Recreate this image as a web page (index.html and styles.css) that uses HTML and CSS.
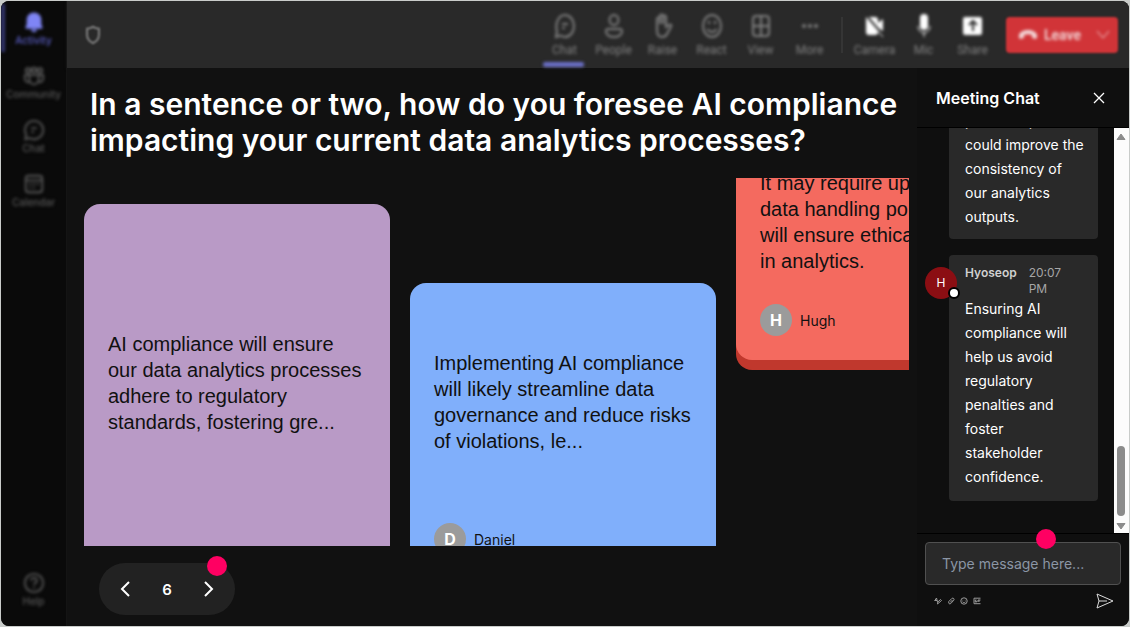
FILE: index.html
```html
<!DOCTYPE html>
<html lang="en">
<head>
<meta charset="utf-8">
<title>Meeting</title>
<link rel="stylesheet" href="styles.css">
</head>
<body>
<div class="app">
  <nav class="rail" aria-label="Apps">
    <button class="rail-item active">
      <svg width="22" height="22" viewBox="0 0 24 24" fill="currentColor"><path d="M12 1.500a8 8 0 0 0-8 8v5l-1.300 3.200c-.3.800.2 1.600 1 1.600h16.600c.8 0 1.300-.8 1-1.600L20 14.500v-5a8 8 0 0 0-8-8zM8.500 20.300a3.600 3.600 0 0 0 7 0z"/></svg>
      <span>Activity</span>
    </button>
    <button class="rail-item">
      <svg width="22" height="22" viewBox="0 0 24 24" fill="none" stroke="currentColor" stroke-width="2"><circle cx="5.500" cy="6" r="2.500"/><circle cx="12" cy="5.500" r="2.500"/><circle cx="18.500" cy="6" r="2.500"/><path d="M7 11h10v5a5 5 0 0 1-10 0zM7 11H2v4a4 4 0 0 0 5 3.500M17 11h5v4a4 4 0 0 1-5 3.500"/></svg>
      <span>Community</span>
    </button>
    <button class="rail-item">
      <svg width="22" height="22" viewBox="0 0 24 24" fill="none" stroke="currentColor" stroke-width="2"><path d="M12 2a10 10 0 1 1-4.700 18.800L2.500 22l1-5A10 10 0 0 1 12 2zM9 10h6M9 14h3"/></svg>
      <span>Chat</span>
    </button>
    <button class="rail-item">
      <svg width="22" height="22" viewBox="0 0 24 24" fill="none" stroke="currentColor" stroke-width="2"><rect x="3" y="3" width="18" height="18" rx="3"/><path d="M3 8h18M7 12h2M11 12h2M15 12h2M7 16h2M11 16h2"/></svg>
      <span>Calendar</span>
    </button>
    <button class="rail-item help">
      <svg width="22" height="22" viewBox="0 0 24 24" fill="none" stroke="currentColor" stroke-width="2"><circle cx="12" cy="12" r="10"/><path d="M9 9.500a3 3 0 1 1 4 2.800c-.8.400-1 .9-1 2M12 16v2"/></svg>
      <span>Help</span>
    </button>
  </nav>

  <div class="workspace">
    <header class="topbar">
      <svg class="shield" width="18" height="20" viewBox="0 0 18 22" fill="none" stroke="currentColor" stroke-width="2"><path d="M9 2c2 1.500 4 2 6.500 2v7c0 4-2.500 7-6.500 9-4-2-6.500-5-6.500-9V4C5 4 7 3.500 9 2z"/></svg>
      <div class="tools">
        <button class="tool selected">
          <svg width="24" height="28" viewBox="0 0 24 28" fill="none" stroke="currentColor" stroke-width="2"><path d="M12 3c5 0 9 5 9 11s-4 11-9 11c-2 0-3-.5-4.500-1.500L3 25l1-5.500C2 12 5 3 12 3zM9 12h6M9 16h3"/></svg>
          <span>Chat</span>
        </button>
        <button class="tool">
          <svg width="24" height="28" viewBox="0 0 24 28" fill="none" stroke="currentColor" stroke-width="2"><ellipse cx="12" cy="8" rx="4.500" ry="5"/><path d="M6 17h12c1.500 0 2 1 2 2.500 0 3.500-4 5.500-8 5.500s-8-2-8-5.500C4 18 4.500 17 6 17z"/></svg>
          <span>People</span>
        </button>
        <button class="tool">
          <svg width="24" height="28" viewBox="0 0 24 28" fill="none" stroke="currentColor" stroke-width="2"><path d="M6 14V7c0-2 3-2 3 0v5V4c0-2 3-2 3 0v8V5c0-2 3-2 3 0v10l3-2c1.500-1 3 0 2 1.500L16 22c-1 2-2.500 3-5 3-4 0-5-4-5-7z"/></svg>
          <span>Raise</span>
        </button>
        <button class="tool">
          <svg width="24" height="28" viewBox="0 0 24 28" fill="none" stroke="currentColor" stroke-width="2"><ellipse cx="12" cy="14" rx="9" ry="11"/><path d="M7.500 17c2.500 4 6.500 4 9 0M9 9v3M15 9v3"/></svg>
          <span>React</span>
        </button>
        <button class="tool">
          <svg width="24" height="28" viewBox="0 0 24 28" fill="none" stroke="currentColor" stroke-width="2"><rect x="4" y="4" width="16" height="20" rx="3"/><path d="M12 4v20M4 14h16"/></svg>
          <span>View</span>
        </button>
        <button class="tool">
          <svg width="24" height="28" viewBox="0 0 24 28" fill="currentColor"><circle cx="6" cy="14" r="2"/><circle cx="12" cy="14" r="2"/><circle cx="18" cy="14" r="2"/></svg>
          <span>More</span>
        </button>
        <i class="divider"></i>
        <button class="tool bright">
          <svg width="24" height="28" viewBox="0 0 24 28" fill="currentColor"><path d="M3 5h9c2 0 3 1 3 3v3l5-4v12l-5-3v4c0 2-1 3-3 3H6c-2 0-3-1-3-3z"/><path d="M2 2l19 22" stroke="#292929" stroke-width="2"/><path d="M15 19l5 6" stroke="currentColor" stroke-width="1"/></svg>
          <span>Camera</span>
        </button>
        <button class="tool bright">
          <svg width="24" height="28" viewBox="0 0 24 28" fill="currentColor"><rect x="8" y="2" width="8" height="16" rx="4"/><path d="M6 14c0 9 12 9 12 0M12 20v5" fill="none" stroke="currentColor" stroke-width="1"/></svg>
          <span>Mic</span>
        </button>
        <button class="tool bright">
          <svg width="24" height="28" viewBox="0 0 24 28" fill="currentColor"><rect x="2" y="5" width="19" height="18" rx="2"/><path d="M12 19V9M8 13l4-4 4 4" fill="none" stroke="#292929" stroke-width="2"/></svg>
          <span>Share</span>
        </button>
        <button class="leave">
          <svg width="20" height="12" viewBox="0 0 20 12" fill="currentColor"><path d="M10 1c4 0 8 1.500 9 5 .3 1.500 0 3-1 4l-4-1V6c-2.500-1-5.500-1-8 0v3l-4 1C1 9 .7 7.500 1 6c1-3.500 5-5 9-5z"/></svg>
          <span>Leave</span>
          <svg class="caret" width="14" height="10" viewBox="0 0 14 10" fill="none" stroke="currentColor"><path d="M1 1l6 7 6-7"/></svg>
        </button>
      </div>
    </header>

    <div class="content">
      <main class="stage">
        <h1>In a sentence or two, how do you foresee AI compliance impacting your current data analytics processes?</h1>
        <div class="board">
          <article class="card purple">
            <p>AI compliance will ensure our data analytics processes adhere to regulatory standards, fostering gre...</p>
          </article>
          <article class="card blue">
            <p>Implementing AI compliance will likely streamline data governance and reduce risks of violations, le...</p>
            <footer class="author"><b>D</b><span>Daniel</span></footer>
          </article>
          <article class="card red">
            <p>It may require updates to<br>data handling policies but<br>will ensure ethical rigor<br>in analytics.</p>
            <footer class="author"><b>H</b><span>Hugh</span></footer>
          </article>
        </div>
        <div class="pager">
          <button aria-label="Previous"><svg width="12" height="18" viewBox="0 0 12 18" fill="none" stroke="currentColor" stroke-width="2"><path d="M10 2L3 9l7 7"/></svg></button>
          <span>6</span>
          <button aria-label="Next"><svg width="12" height="18" viewBox="0 0 12 18" fill="none" stroke="currentColor" stroke-width="2"><path d="M2 2l7 7-7 7"/></svg></button>
          <i class="hotspot"></i>
        </div>
      </main>

      <aside class="chat">
        <header class="chat-head">
          <h2>Meeting Chat</h2>
          <button aria-label="Close"><svg width="12" height="12" viewBox="0 0 12 12" fill="none" stroke="currentColor" stroke-width="1.300"><path d="M1 1l10 10M11 1L1 11"/></svg></button>
        </header>
        <div class="chat-body">
          <div class="messages">
            <div class="message"><p>positive updates could improve the consistency of our analytics outputs.</p></div>
            <div class="message">
              <div class="avatar">H<i></i></div>
              <div class="meta"><strong>Hyoseop</strong><time>20:07 PM</time></div>
              <p>Ensuring AI compliance will help us avoid regulatory penalties and foster stakeholder confidence.</p>
            </div>
          </div>
          <div class="scrollbar">
            <svg width="10" height="8" viewBox="0 0 10 8"><path d="M5 1l4 5.500H1z" fill="#8b8b8b" stroke="#8b8b8b" stroke-linejoin="round"/></svg>
            <i class="thumb"></i>
            <svg width="10" height="8" viewBox="0 0 10 8"><path d="M5 7L1 1.500h8z" fill="#8b8b8b" stroke="#8b8b8b" stroke-linejoin="round"/></svg>
          </div>
        </div>
        <form class="composer">
          <div class="field">
            <input type="text" placeholder="Type message here..." aria-label="Message">
            <i class="hotspot"></i>
          </div>
          <div class="actions">
            <button type="button" aria-label="Format"><svg width="8" height="8" viewBox="0 0 8 8"><path d="M.5 4L2.500 1l1 4M1 3.500h2M3.500 7L7.500 3.500 6.500 2.500 3.800 5z"/></svg></button>
            <button type="button" aria-label="Attach"><svg width="8" height="8" viewBox="0 0 8 8"><path d="M1.800 4.500l3-3c1.200-1 3 .3 2 1.700L3.800 6.500c-1.200 1.200-3-.5-2-2zM3 5.500L5.500 3"/></svg></button>
            <button type="button" aria-label="Emoji"><svg width="8" height="8" viewBox="0 0 8 8"><circle cx="4" cy="4" r="3.200"/><path d="M2.500 4.800c1 1 2 1 3 0M2.800 2.800v.6M5.200 2.800v.6"/></svg></button>
            <button type="button" aria-label="GIF"><svg width="8" height="8" viewBox="0 0 8 8"><path d="M7.500 1.200H1v5.500h6.500M3.500 3H2.300v2h1.400V4M5 5V3h2.500M5 4h2"/></svg></button>
            <button type="submit" class="send" aria-label="Send"><svg width="18" height="16" viewBox="0 0 18 16"><path d="M1 1l16 7L1 15l2-7zM3 8h8"/></svg></button>
          </div>
        </form>
      </aside>
    </div>
  </div>
</div>
</body>
</html>
```
FILE: styles.css
```css
* { box-sizing: border-box; }

body {
  margin: 0;
  height: 100vh;
  padding: 1px;
  background: #c9ccca;
  color: #fff;
  font-family: Inter, "Liberation Sans", sans-serif;
}

h1, h2, p { margin: 0; }

button {
  border: 0;
  padding: 0;
  background: none;
  color: inherit;
  font: inherit;
}

svg { display: block; }

.app {
  display: flex;
  height: 100%;
  border-radius: 8px;
  overflow: hidden;
  background: #111;
}

/* Left rail */
.rail {
  flex: none;
  display: flex;
  flex-direction: column;
  width: 66px;
  padding: 0 0 10px;
  background: #0a0a0a;
  border-right: 1px solid #141414;
}

.rail-item {
  position: relative;
  display: flex;
  flex-direction: column;
  align-items: center;
  justify-content: center;
  gap: 1px;
  height: 54px;
  color: #585858;
  font-size: 10px;
  font-weight: 500;
  line-height: 12px;
  filter: blur(1px) blur(1px);
}

.rail-item.active { color: #5b5fc7; }
.rail-item.active svg { color: #7f85f5; }

.rail-item.active::before {
  content: "";
  position: absolute;
  left: 0;
  top: 3px;
  width: 4px;
  height: 48px;
  background: #33366f;
}

.rail-item.help { margin-top: auto; }

/* Top bar */
.workspace {
  flex: 1;
  min-width: 0;
  display: flex;
  flex-direction: column;
}

.topbar {
  flex: none;
  display: flex;
  align-items: center;
  justify-content: space-between;
  height: 67px;
  padding: 0 11px 0 17px;
  background: #292929;
  box-shadow: 0 1px 3px #1a1a1a;
}

.shield { color: #888; filter: blur(1px); }

.tools { display: flex; align-items: center; }

.tool {
  position: relative;
  display: flex;
  flex-direction: column;
  align-items: center;
  gap: 1px;
  width: 49px;
  height: 67px;
  padding-top: 11px;
  color: #808080;
  font-family: Roboto, sans-serif;
  font-size: 12px;
  line-height: 18px;
  filter: blur(1px) blur(1px);
}

.tool.bright svg { color: #fff; }

.tool.selected::after {
  content: "";
  position: absolute;
  left: 3px;
  bottom: 1px;
  width: 41px;
  height: 5px;
  border-radius: 2px;
  background: #6b6fc8;
}

.divider {
  width: 2px;
  height: 36px;
  margin: 0 7px;
  background: #353535;
}

.leave {
  display: flex;
  align-items: center;
  gap: 6px;
  width: 112px;
  height: 36px;
  margin-left: 9px;
  padding: 0 8px 0 12px;
  border-radius: 4px;
  background: #d13438;
  color: #f3d9da;
  font-family: Roboto, sans-serif;
  font-size: 14px;
  font-weight: 600;
  filter: blur(1px);
}

.leave svg, .leave span { filter: blur(1px); }

.caret { margin-left: auto; }

/* Stage */
.content { flex: 1; min-height: 0; display: flex; }

.stage {
  flex: 1;
  min-width: 0;
  display: flex;
  flex-direction: column;
  align-items: flex-start;
  padding: 18px 8px 11px 17px;
  background: #111;
}

h1 {
  padding-left: 6px;
  font-size: 30px;
  font-weight: 600;
  line-height: 36px;
}

.board {
  flex: 1;
  min-height: 0;
  align-self: stretch;
  display: flex;
  align-items: flex-start;
  gap: 20px;
  margin: 20px 0 17px;
  overflow: hidden;
}

.card {
  flex: none;
  display: flex;
  flex-direction: column;
  justify-content: center;
  width: 306px;
  padding: 24px;
  border-radius: 16px;
  color: #111;
}

.card p {
  margin: auto 0;
  font-family: "Liberation Sans", Arial, sans-serif;
  font-size: 20px;
  line-height: 26px;
}

.purple { min-height: 358px; margin-top: 26px; background: #b99ac6; }
.blue { min-height: 296px; margin-top: 105px; background: #80affb; }
.red { margin-top: -32px; background: #f46a5f; box-shadow: 0 10px #c0382d; }

.author {
  display: flex;
  align-items: center;
  gap: 8px;
  padding-top: 30px;
  font-size: 14px;
}

.blue .author { padding-top: 26px; }

.author b {
  width: 32px;
  border-radius: 50%;
  background: #9b9b9b;
  color: #fff;
  font-size: 16px;
  line-height: 32px;
  text-align: center;
}

.pager {
  position: relative;
  display: flex;
  align-items: center;
  justify-content: space-between;
  width: 136px;
  height: 52px;
  margin-left: 15px;
  padding: 0 20px;
  border-radius: 26px;
  background: #222;
  font-size: 15px;
  font-weight: 600;
}

.hotspot {
  position: absolute;
  width: 20px;
  height: 20px;
  border-radius: 50%;
  background: #ff0062;
}

.pager .hotspot { right: 8px; top: -7px; }

/* Chat */
.chat {
  flex: none;
  display: flex;
  flex-direction: column;
  width: 212px;
  background: #0f0f0f;
}

.chat-head {
  display: flex;
  align-items: center;
  justify-content: space-between;
  height: 60px;
  padding: 0 24px 0 19px;
  border-bottom: 1px solid #000;
}

h2 { font-size: 16px; font-weight: 600; line-height: 24px; }

.chat-body { flex: 1; min-height: 0; display: flex; }

.messages {
  flex: 1;
  min-width: 0;
  display: flex;
  flex-direction: column;
  justify-content: flex-end;
  gap: 16px;
  padding: 0 16px 32px 32px;
  overflow: hidden;
}

.message {
  position: relative;
  padding: 10px 14px 10px 16px;
  border-radius: 4px;
  background: #292929;
  font-size: 14px;
  line-height: 24px;
}

.meta {
  display: flex;
  gap: 12px;
  padding-right: 4px;
  color: #a6a6a6;
  font-size: 12px;
  line-height: 16px;
}

.meta strong { color: #d0d0d0; font-weight: 600; }

.message:last-child { padding-bottom: 12px; }

.avatar {
  position: absolute;
  left: -24px;
  top: 12px;
  width: 32px;
  border-radius: 50%;
  background: #8b0e13;
  font-size: 12px;
  line-height: 32px;
  text-align: center;
}

.avatar i {
  position: absolute;
  right: -3px;
  bottom: 0;
  width: 12px;
  height: 12px;
  border: 2px solid #000;
  border-radius: 50%;
  background: #fff;
}

.scrollbar {
  display: flex;
  flex-direction: column;
  align-items: center;
  width: 15px;
  padding: 5px 1px 3px 0;
  background: #fcfcfc;
}

.thumb {
  width: 8px;
  height: 70px;
  margin: auto 0 6px;
  border-radius: 4px;
  background: #8b8b8b;
}

.composer { padding: 8px 8px 9px; border-top: 1px solid #000; }

.field { position: relative; }

.field input {
  display: block;
  width: 100%;
  height: 43px;
  padding: 0 16px;
  border: 1px solid #505050;
  border-radius: 4px;
  background: #292929;
  color: #fff;
  font: 14px/24px Inter, "Liberation Sans", sans-serif;
}

.field input::placeholder { color: #8b96a5; }

.field .hotspot { right: 65px; top: -13px; }

.actions {
  display: flex;
  align-items: center;
  gap: 5px;
  height: 32px;
  padding: 0 7px 0 9px;
}

.actions svg { fill: none; stroke: #9a9a9a; stroke-width: 1; }
.actions .send { margin-left: auto; }
.actions .send svg { stroke: #ddd; }
```
